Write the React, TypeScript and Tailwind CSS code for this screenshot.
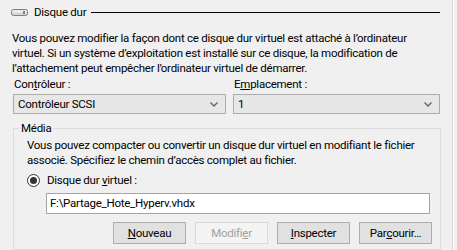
const font = "font-['Roboto','Noto_Sans',sans-serif] text-[11.5px] tracking-[-0.25px]"

function Chevron() {
  return (
    <svg width="8" height="5" viewBox="0 0 8 5" className="shrink-0">
      <path d="M0.5 0.5 L4 4 L7.5 0.5" fill="none" stroke="#606060" strokeWidth="1.3" />
    </svg>
  )
}

function Combo({ value, className }: { value: string; className: string }) {
  return (
    <div className={`h-[20px] border border-[#acacac] bg-[#e7e7e7] flex items-center justify-between pl-[4px] pr-[7px] ${className}`}>
      <span>{value}</span>
      <Chevron />
    </div>
  )
}

function Btn({ children, disabled }: { children: React.ReactNode; disabled?: boolean }) {
  return (
    <div
      className={`w-[73px] h-[22px] flex items-center justify-center border ${
        disabled ? "border-[#d9d9d9] bg-[#f4f4f4] text-[#a0a0a0]" : "border-[#adadad] bg-[#e1e1e1]"
      }`}
    >
      {children}
    </div>
  )
}

function DiskIcon() {
  return (
    <svg width="17" height="7" viewBox="0 0 17 7" className="shrink-0">
      <rect x="0.5" y="0.5" width="16" height="6" rx="2" fill="#d6d6d6" stroke="#7f7f7f" />
      <rect x="1.5" y="1.5" width="14" height="2" fill="#f2f2f2" />
      <rect x="12" y="2" width="2" height="3" fill="#3cb23c" />
    </svg>
  )
}

export default function App() {
  return (
    <div className={`w-[457px] h-[250px] bg-[#f0f0f0] flex overflow-hidden leading-[15px] text-black ${font}`}>
      <div className="w-[452px] flex flex-col">
        {/* header */}
        <div className="flex items-center h-[15px] mt-[5px] pl-[11px]">
          <DiskIcon />
          <span className="ml-[6px]">Disque dur</span>
          <div className="flex-1 h-px bg-black ml-[5px] mr-[12px]" />
        </div>

        <p className="mt-[11px] pl-[12px] whitespace-nowrap">
          Vous pouvez modifier la façon dont ce disque dur virtuel est attaché à l’ordinateur
          <br />
          virtuel. Si un système d’exploitation est installé sur ce disque, la modification de
          <br />
          l’attachement peut empêcher l’ordinateur virtuel de démarrer.
        </p>

        {/* combos */}
        <div className="flex pl-[13px] gap-[7px] mt-[1px]">
          <div className="flex flex-col gap-[2px]">
            <span className="pl-[1px]">
              Con<u>t</u>rôleur :
            </span>
            <Combo value="Contrôleur SCSI" className="w-[213px]" />
          </div>
          <div className="flex flex-col gap-[2px]">
            <span className="pl-[1px]">
              E<u>m</u>placement :
            </span>
            <Combo value="1" className="w-[207px]" />
          </div>
        </div>

        {/* Média group */}
        <div className="relative mt-[14px] ml-[13px] w-[428px] border border-[#dcdcdc] h-[140px]">
          <span className="absolute -top-[8px] left-[5px] px-[2px] bg-[#f0f0f0]">Média</span>
          <div className="pl-[13px] pt-[9px] flex flex-col">
            <p className="whitespace-nowrap">
              Vous pouvez compacter ou convertir un disque dur virtuel en modifiant le fichier
              <br />
              associé. Spécifiez le chemin d’accès complet au fichier.
            </p>
            <div className="flex items-center h-[16px] mt-[4px]">
              <div className="w-[13px] h-[13px] rounded-full border border-[#333] bg-white flex items-center justify-center">
                <div className="w-[7px] h-[7px] rounded-full bg-[#333]" />
              </div>
              <span className="ml-[7px]">
                Disque dur <u>v</u>irtuel :
              </span>
            </div>
            <div className="mt-[5px] ml-[19px] w-[384px] h-[21px] border border-[#a5a5a5] bg-white flex items-center pl-[3px]">
              F:\Partage_Hote_Hyperv.vhdx
            </div>
            <div className="mt-[8px] flex gap-[9px] pl-[86px]">
              <Btn>
                <u>N</u>ouveau
              </Btn>
              <Btn disabled>
                Modifi<u>e</u>r
              </Btn>
              <Btn>
                <u>I</u>nspecter
              </Btn>
              <Btn>
                Par<u>c</u>ourir…
              </Btn>
            </div>
          </div>
        </div>
      </div>
      <div className="w-px bg-[#dadada]" />
      <div className="w-px bg-white" />
      <div className="flex-1" />
    </div>
  )
}
